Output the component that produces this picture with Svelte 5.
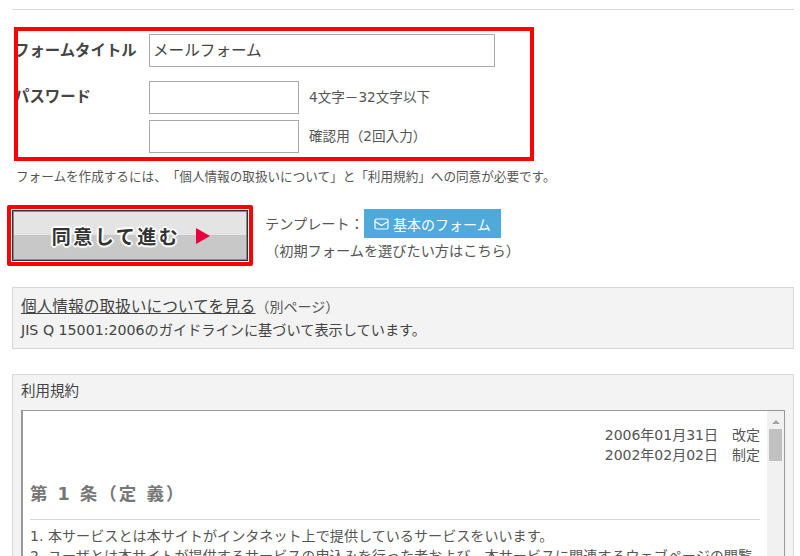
<script>
  let title = 'メールフォーム';
  const dates = ['2006年01月31日　改定', '2002年02月02日　制定'];
  const rules = [
    '1. 本サービスとは本サイトがインタネット上で提供しているサービスをいいます。',
    '2. ユーザとは本サイトが提供するサービスの申込みを行った者および、本サービスに関連するウェブページの閲覧'
  ];
</script>

<div class="page">
  <hr class="rule" />

  <section class="form">
    <div class="row">
      <div class="label">フォームタイトル</div>
      <input class="input wide" type="text" value={title} />
    </div>
    <div class="row pw">
      <div class="label">パスワード</div>
      <div class="pw-list">
        <div class="pw-row">
          <input class="input short" type="password" />
          <span class="hint">4文字－32文字以下</span>
        </div>
        <div class="pw-row">
          <input class="input short" type="password" />
          <span class="hint">確認用（2回入力）</span>
        </div>
      </div>
    </div>
    <div class="mark mark-form"></div>
  </section>

  <p class="note">フォームを作成するには、「個人情報の取扱いについて」と「利用規約」への同意が必要です。</p>

  <div class="actions">
    <div class="submit-wrap">
      <button class="submit">
        <span class="submit-text">同意して進む</span>
        <svg width="16" height="16" viewBox="0 0 16 16"><path d="M1 0 L15 8 L1 16 Z" fill="#e8003c" /></svg>
      </button>
    </div>
    <div class="template">
      <div class="template-row">
        <span class="template-label">テンプレート：</span>
        <button class="blue">
          <svg width="15" height="12" viewBox="0 0 15 12" fill="none" stroke="#fff" stroke-width="1.2">
            <rect x="1" y="1" width="13" height="10" rx="1.5" />
            <path d="M1 3.5 L7.5 7.5 L14 3.5" />
          </svg>
          基本のフォーム
        </button>
      </div>
      <div class="template-sub">（初期フォームを選びたい方はこちら）</div>
    </div>
  </div>

  <div class="panel privacy">
    <div><a href="#privacy">個人情報の取扱いについてを見る</a><span class="small">（別ページ）</span></div>
    <div class="jis">JIS Q 15001:2006のガイドラインに基づいて表示しています。</div>
  </div>

  <div class="panel terms">
    <div class="terms-title">利用規約</div>
    <div class="terms-box">
      <div class="terms-body">
        <div class="dates">
          {#each dates as d}
            <div>{d}</div>
          {/each}
        </div>
        <h2>第 1 条（定 義）</h2>
        <hr class="sub-rule" />
        {#each rules as r}
          <div class="clause">{r}</div>
        {/each}
      </div>
      <div class="scrollbar">
        <div class="arrow"></div>
        <div class="thumb"></div>
      </div>
    </div>
  </div>
</div>

<style>
  :global(body) { margin: 0; background: #fff; }
  .page {
    width: 800px;
    height: 556px;
    overflow: hidden;
    box-sizing: border-box;
    padding: 9px 6px 0 12px;
    font-family: "DejaVu Sans", "Noto Sans CJK JP", sans-serif;
    text-spacing-trim: space-all;
    color: #555;
    font-size: 13px;
  }
  .rule { margin: 0; border: 0; border-top: 1px solid #d8d8d8; }
  .form { position: relative; height: 134px; margin-top: 17px; box-sizing: border-box; padding: 7px 0 0 2px; }
  .mark { position: absolute; border: 4px solid #f00; box-sizing: border-box; pointer-events: none; }
  .mark-form { left: 2px; top: 0; width: 520px; height: 134px; }
  .row { display: flex; align-items: center; }
  .pw { align-items: flex-start; margin-top: 14px; }
  .label { width: 135px; font-size: 15.4px; font-weight: 700; color: #444; white-space: nowrap; padding-bottom: 3px; }
  .pw .label { padding-top: 3px; }
  .input {
    box-sizing: border-box;
    height: 33px;
    border: 1px solid #aaa;
    padding: 0 3px 3px;
    font: inherit;
    font-size: 15.6px;
    color: #444;
    background: #fff;
    border-radius: 0;
    outline: 0;
  }
  .wide { width: 346px; }
  .short { width: 150px; }
  .pw-list { display: flex; flex-direction: column; gap: 6px; }
  .pw-row { display: flex; align-items: center; gap: 10px; }
  .hint { font-size: 13.6px; padding-bottom: 3px; }
  .note { margin: 6px 0 0 4px; font-size: 12.6px; line-height: 20px; color: #555; }
  .actions { display: flex; margin-top: 18px; margin-left: -4px; }
  .submit-wrap { width: 246px; height: 61px; margin-left: -1px; box-sizing: border-box; border: 4px solid #f00; padding: 1px; background: #fff; border-radius: 2px; flex: none; }
  .submit {
    width: 100%;
    height: 100%;
    box-sizing: border-box;
    border: 1px solid #333;
    outline: 1px solid #888;
    outline-offset: -2px;
    background: linear-gradient(#e4e4e4 50%, #c8c8c8 50%);
    display: flex;
    align-items: center;
    justify-content: center;
    gap: 15px;
    padding: 0 0 0 3px;
    font: inherit;
  }
  .submit-text {
    font-size: 19px;
    font-weight: 700;
    letter-spacing: 2.5px;
    color: #333;
    text-shadow: 2px 0 1px #fff, -2px 0 1px #fff, 0 2px 1px #fff, 0 -2px 1px #fff, 1px 1px 1px #fff, -1px -1px 1px #fff, 1px -1px 1px #fff, -1px 1px 1px #fff;
  }
  .template { margin-left: 12px; font-size: 14.2px; padding-top: 4px; }
  .template-row { display: flex; align-items: center; }
  .template-label { padding-bottom: 2px; }
  .blue {
    width: 137px;
    height: 29px;
    border: 0;
    background: #4fa9db;
    color: #fff;
    font: inherit;
    font-size: 14px;
    display: flex;
    align-items: center;
    justify-content: center;
    gap: 4px;
    padding: 0;
  }
  .template-sub { margin-top: 1px; line-height: 24px; }
  .panel { background: #f3f3f3; border: 1px solid #d8d8d8; box-sizing: border-box; }
  .privacy { height: 62px; margin-top: 21px; padding: 9px 8px 0; line-height: 20px; font-size: 13px; }
  .privacy a { color: #444; font-size: 15.7px; text-decoration: underline; }
  .small { font-size: 14px; }
  .jis { font-size: 14.2px; color: #444; margin-top: 2px; }
  .terms { margin-top: 25px; height: 300px; padding: 4px 8px 0; }
  .terms-title { font-size: 14.5px; line-height: 24px; color: #444; }
  .terms-box { display: flex; margin-top: 7px; height: 260px; background: #fff; border: 1px solid #999; border-left-width: 2px; }
  .terms-body { flex: 1; padding: 14px 7px 0 7px; min-width: 0; }
  .dates { text-align: right; font-size: 14px; line-height: 20px; color: #555; }
  h2 { margin: 15px 0 0; font-size: 17.5px; letter-spacing: 2px; line-height: 28px; color: #777; font-weight: 700; }
  .sub-rule { margin: 11px 0 6px; border: 0; border-top: 1px solid #d8d8d8; }
  .clause { font-size: 14.1px; line-height: 20px; white-space: nowrap; overflow: hidden; color: #555; }
  .scrollbar { width: 17px; background: #f1f1f1; flex: none; display: flex; flex-direction: column; align-items: center; }
  .arrow { margin-top: 9px; width: 0; height: 0; border-left: 4px solid transparent; border-right: 4px solid transparent; border-bottom: 4px solid #a3a3a3; }
  .thumb { margin-top: 5px; width: 13px; height: 32px; background: #c1c1c1; }
</style>
